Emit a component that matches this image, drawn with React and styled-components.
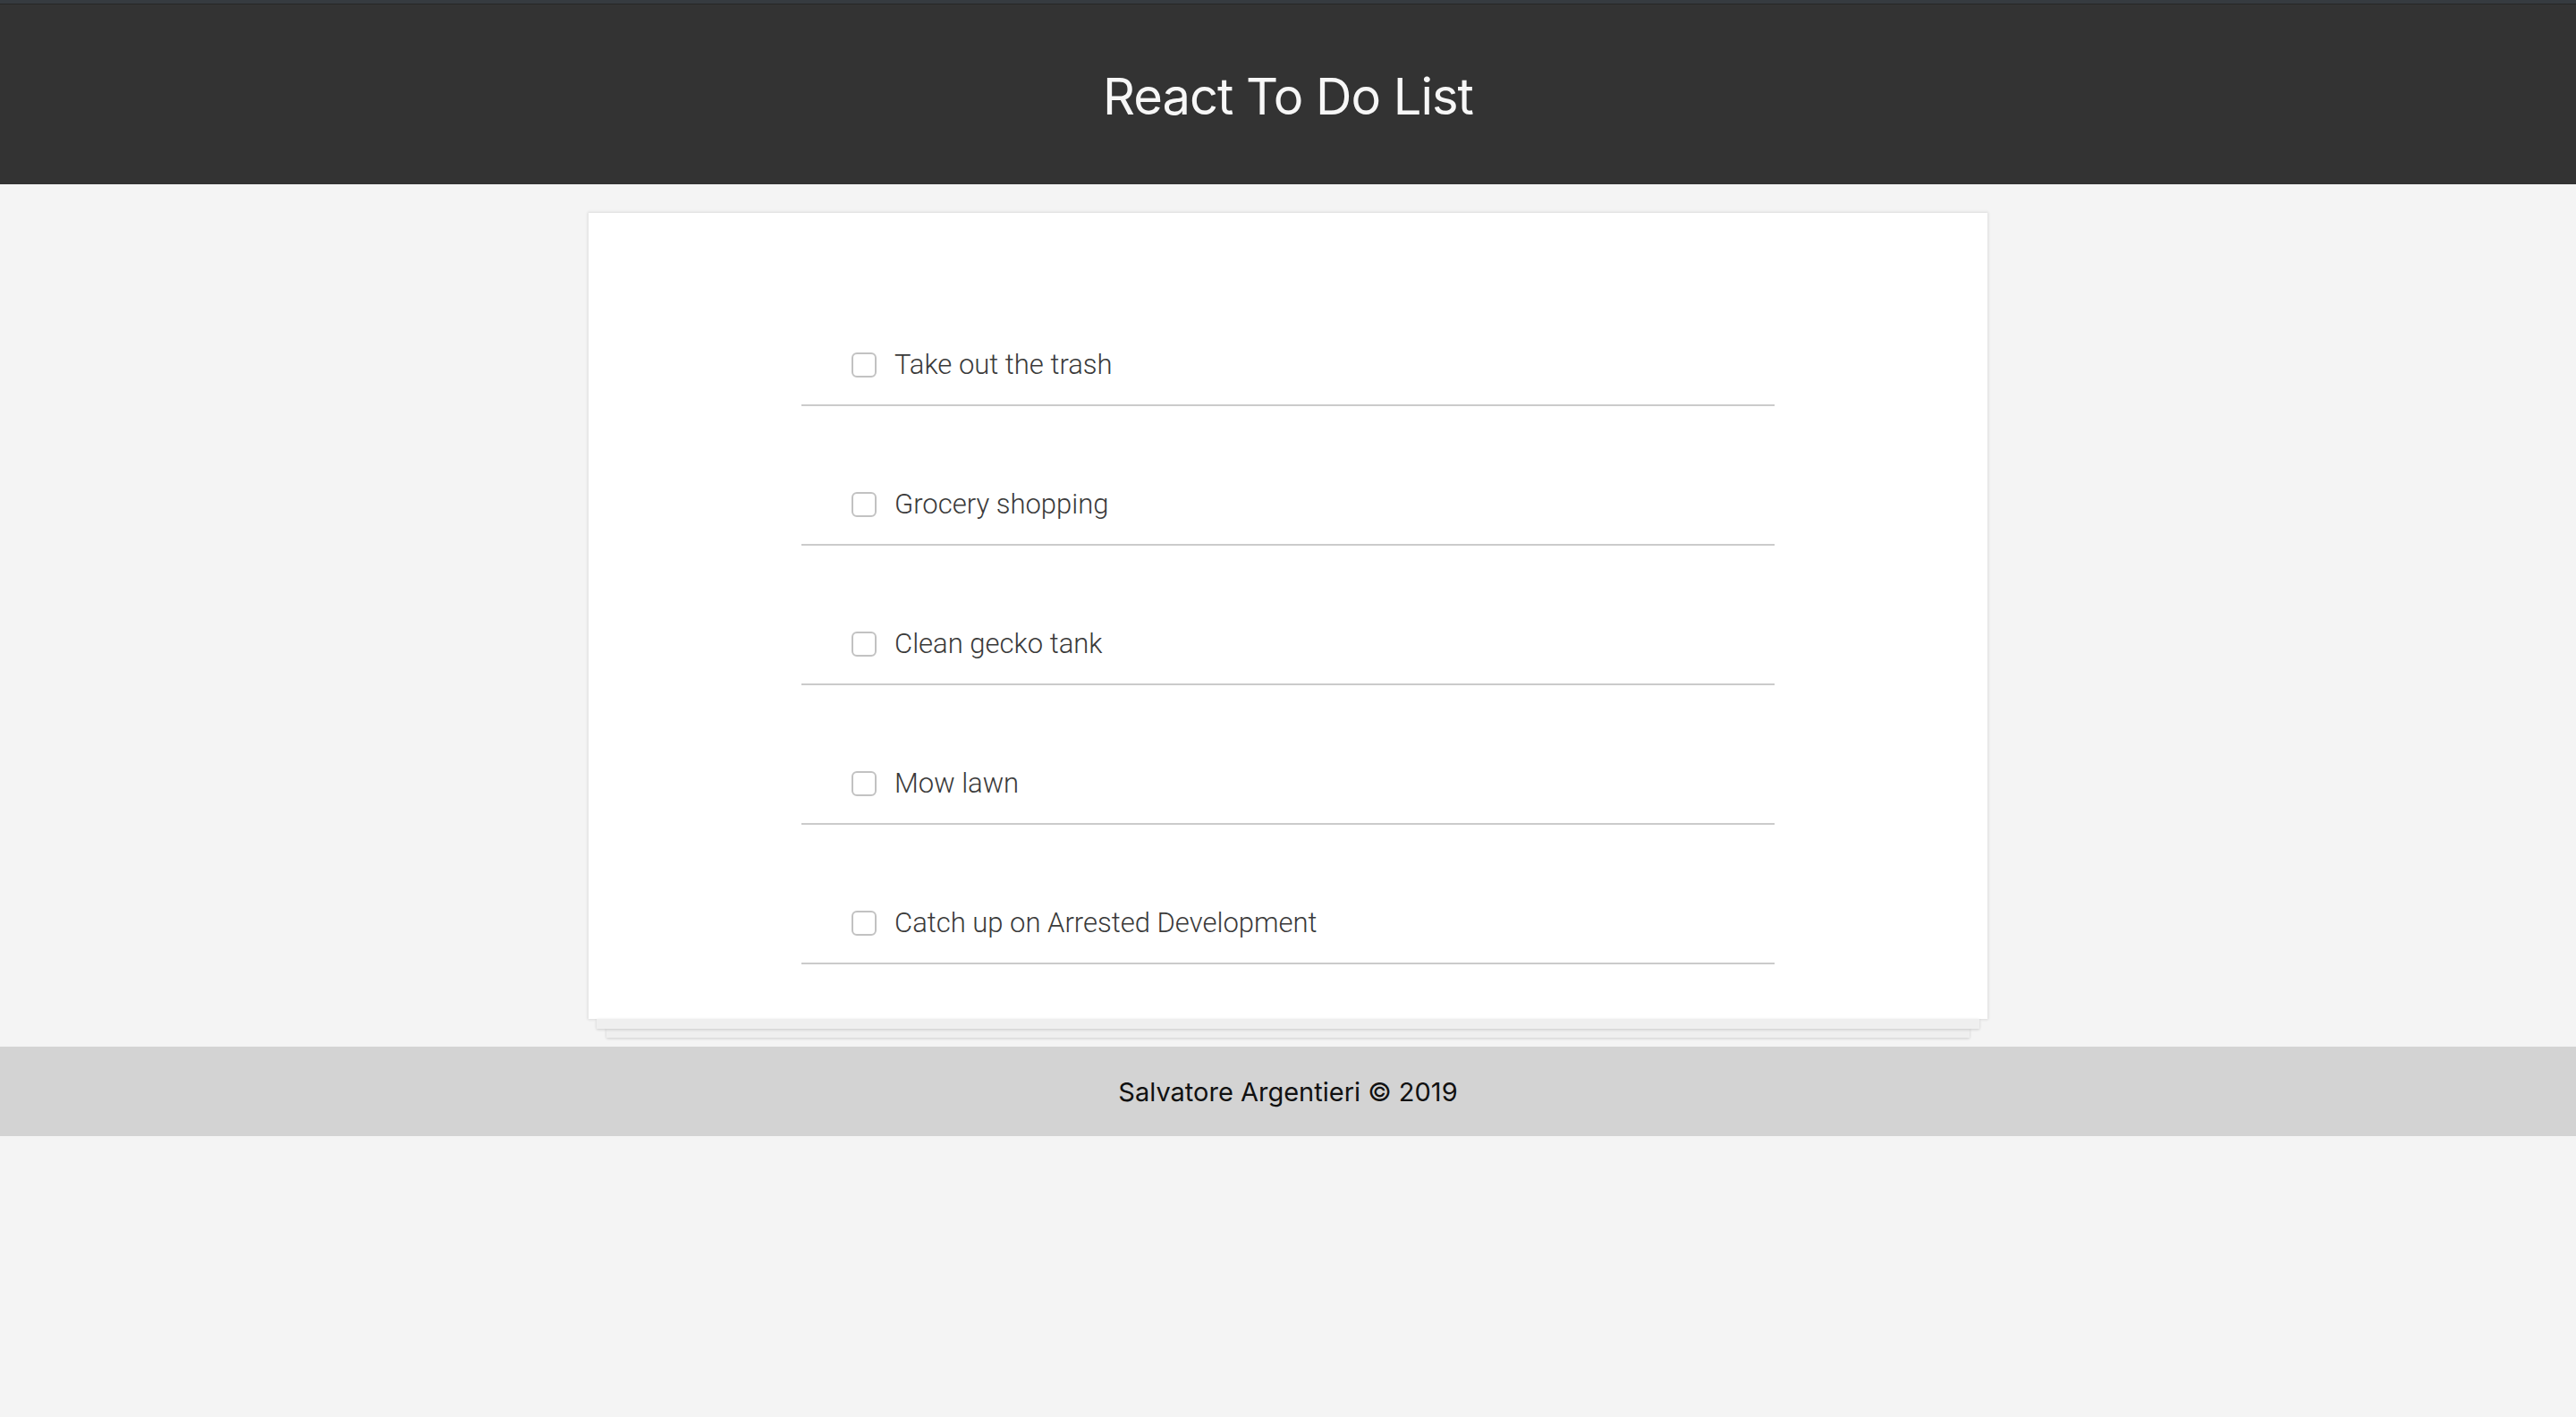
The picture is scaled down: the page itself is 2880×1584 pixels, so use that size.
import React from "react";
import styled, { createGlobalStyle } from "styled-components";

const GlobalStyle = createGlobalStyle`
  html, body {
    margin: 0;
    padding: 0;
    background: #f4f4f4;
  }
  body {
    font-family: Inter, "Noto Sans", sans-serif;
  }
  * { box-sizing: border-box; }
`;

const Page = styled.div`
  min-height: 1584px;
  background: #f4f4f4;
  display: flex;
  flex-direction: column;
`;

const Header = styled.header`
  height: 206px;
  background: #333333;
  border-top: 4px solid #363b40;
  box-shadow: inset 0 1px 0 #262626;
  display: flex;
  align-items: center;
  justify-content: center;
`;

const Title = styled.h1`
  margin: 0;
  padding-top: 6px;
  font-family: Inter, "Noto Sans", sans-serif;
  font-weight: 400;
  font-size: 56px;
  letter-spacing: -1px;
  color: #f7f7f7;
`;

const Card = styled.main`
  position: relative;
  isolation: isolate;
  width: 1564px;
  margin: 32px auto 31px;
  padding: 60px 0 61px;
  background: #ffffff;
  box-shadow: 0 0 3px 1px rgba(0, 0, 0, 0.1);

  &::before,
  &::after {
    content: "";
    position: absolute;
    height: 11px;
    background: #efefef;
    box-shadow: 0 1px 3px rgba(0, 0, 0, 0.16);
  }
  &::before {
    left: 9px;
    right: 9px;
    bottom: -11px;
    z-index: -1;
  }
  &::after {
    left: 20px;
    right: 20px;
    bottom: -21px;
    z-index: -2;
  }
`;

const List = styled.ul`
  list-style: none;
  margin: 0 auto;
  padding: 0;
  width: 1088px;
`;

const Row = styled.li`
  height: 156px;
  padding: 90px 0 24px 56px;
  border-bottom: 2px solid #cbcbcb;
  display: flex;
  align-items: center;
  gap: 20px;
`;

const Box = styled.input.attrs({ type: "checkbox" })`
  appearance: none;
  -webkit-appearance: none;
  margin: 0;
  width: 28px;
  height: 28px;
  flex: none;
  border: 2px solid #c2c2c2;
  border-radius: 6px;
  background: #ffffff;
`;

const Label = styled.span`
  font-family: Roboto, "Liberation Sans", sans-serif;
  font-weight: 300;
  font-size: 31px;
  line-height: 40px;
  color: #3a3a3a;
`;

const Footer = styled.footer`
  height: 100px;
  background: #d3d3d3;
  display: flex;
  align-items: center;
  justify-content: center;
`;

const FooterText = styled.p`
  margin: 0;
  font-family: Inter, "Noto Sans", sans-serif;
  font-weight: 400;
  font-size: 29px;
  color: #111111;
`;

const todos = [
  "Take out the trash",
  "Grocery shopping",
  "Clean gecko tank",
  "Mow lawn",
  "Catch up on Arrested Development",
];

export default function App() {
  return (
    <>
      <GlobalStyle />
      <Page>
        <Header>
          <Title>React To Do List</Title>
        </Header>
        <Card>
          <List>
            {todos.map((t) => (
              <Row key={t}>
                <Box />
                <Label>{t}</Label>
              </Row>
            ))}
          </List>
        </Card>
        <Footer>
          <FooterText>Salvatore Argentieri © 2019</FooterText>
        </Footer>
      </Page>
    </>
  );
}
